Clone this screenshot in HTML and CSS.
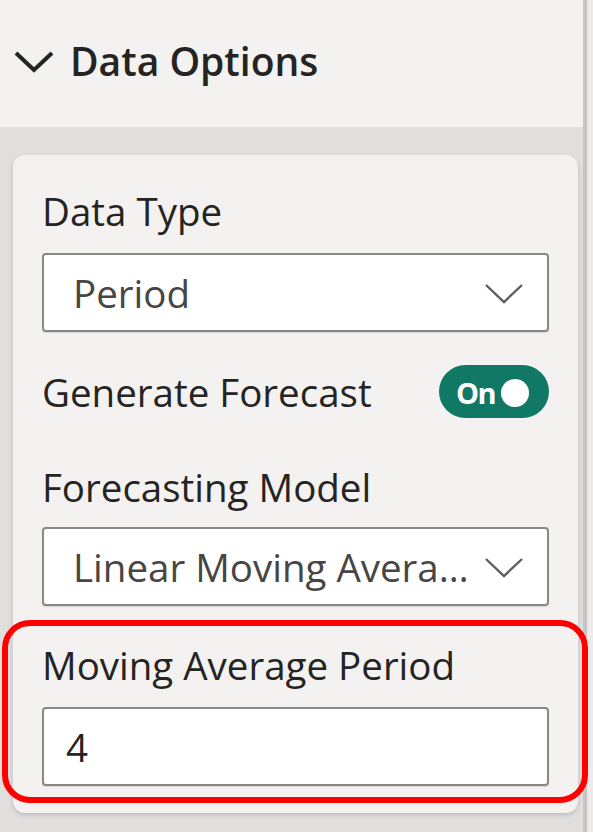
FILE: index.html
```html
<!DOCTYPE html>
<html>
<head>
<meta charset="utf-8">
<title>Data Options</title>
<link rel="stylesheet" href="styles.css">
</head>
<body>
<div class="app">
  <div class="main">
    <header class="section-head">
      <svg class="head-chevron" width="42" height="24" viewBox="0 0 42 24"><polyline points="3,3 21,20 39,3" fill="none" stroke="#252423" stroke-width="4" stroke-linejoin="miter"/></svg>
      <span class="head-title">Data Options</span>
    </header>
    <div class="band">
      <div class="card">
        <div class="field">
          <div class="label">Data Type</div>
          <div class="select">
            <span class="select-text">Period</span>
            <svg class="select-chevron" width="40" height="24" viewBox="0 0 40 24"><polyline points="2,3 20,20 38,3" fill="none" stroke="#605e5c" stroke-width="2.4"/></svg>
          </div>
        </div>
        <div class="toggle-row">
          <span class="label">Generate Forecast</span>
          <div class="toggle"><span class="toggle-text">On</span><span class="knob"></span></div>
        </div>
        <div class="field field-model">
          <div class="label">Forecasting Model</div>
          <div class="select">
            <span class="select-text select-text-clip">Linear Moving Average</span>
            <svg class="select-chevron" width="40" height="24" viewBox="0 0 40 24"><polyline points="2,3 20,20 38,3" fill="none" stroke="#605e5c" stroke-width="2.4"/></svg>
          </div>
        </div>
        <div class="field field-period">
          <div class="label">Moving Average Period</div>
          <div class="input"><span class="input-text">4</span></div>
          <div class="highlight"></div>
        </div>
      </div>
    </div>
  </div>
  <div class="scrollbar"></div>
  <div class="edge"></div>
</div>
</body>
</html>
```

FILE: styles.css
```css
* { box-sizing: border-box; }
html, body { margin: 0; padding: 0; }
body {
  width: 593px;
  height: 832px;
  overflow: hidden;
  font-family: "Open Sans", "Noto Sans", sans-serif;
  color: #252423;
  background: #e1dfdd;
}
.app {
  display: flex;
  height: 832px;
}
.main {
  width: 583px;
  display: flex;
  flex-direction: column;
}
.scrollbar {
  width: 4px;
  background: #c8c6c4;
}
.edge {
  flex: 1;
  background: #edebe9;
}
.section-head {
  height: 127px;
  background: #f3f2f1;
  display: flex;
  align-items: center;
  padding: 0 0 6px 13px;
  gap: 15px;
}
.head-chevron { display: block; margin-top: 2px; }
.head-title {
  font-size: 39px;
  font-weight: 600;
  line-height: 48px;
  color: #252423;
}
.band {
  flex: 1;
  background: #e1dfdd;
  padding: 28px 5px 0 13px;
}
.card {
  background: #f3f2f1;
  border-radius: 12px;
  box-shadow: 0 2px 4px rgba(0, 0, 0, 0.16);
  padding: 32px 29px 27px 29px;
  display: flex;
  flex-direction: column;
}
.label {
  font-size: 38.5px;
  line-height: 48px;
  color: #252423;
  white-space: nowrap;
}
.field {
  display: flex;
  flex-direction: column;
  gap: 18px;
}
.select, .input {
  height: 79px;
  background: #ffffff;
  border: 2px solid #8a8886;
  border-radius: 4px;
  display: flex;
  align-items: center;
  box-shadow: 0 1px 1px rgba(0, 0, 0, 0.12);
}
.select {
  padding: 0 23px 0 29px;
  gap: 10px;
}
.select-text {
  flex: 1;
  min-width: 0;
  font-size: 38.5px;
  line-height: 56px;
  color: #484644;
  white-space: nowrap;
}
.select-text-clip {
  overflow: hidden;
  text-overflow: ellipsis;
}
.select-chevron { display: block; flex: none; margin-top: 2px; }
.input { padding: 0 22px; }
.input-text {
  font-size: 38.5px;
  line-height: 48px;
  color: #252423;
}
.toggle-row {
  margin-top: 33px;
  height: 53px;
  display: flex;
  align-items: center;
  justify-content: space-between;
}
.toggle {
  width: 110px;
  height: 53px;
  border-radius: 27px;
  background: #117865;
  display: flex;
  align-items: center;
  padding: 2px 17px 0 17px;
  gap: 6px;
}
.toggle-text {
  font-size: 29px;
  font-weight: 700;
  line-height: 34px;
  letter-spacing: -1.5px;
  color: #ffffff;
}
.knob {
  width: 28px;
  height: 28px;
  border-radius: 50%;
  background: #ffffff;
}
.field-model {
  margin-top: 45px;
  gap: 16px;
}
.field-period {
  margin-top: 35px;
  position: relative;
}
.highlight {
  position: absolute;
  top: -21px;
  bottom: -17px;
  left: -40px;
  right: -39px;
  border: 6px solid #ff0000;
  border-radius: 28px;
  pointer-events: none;
}
```
